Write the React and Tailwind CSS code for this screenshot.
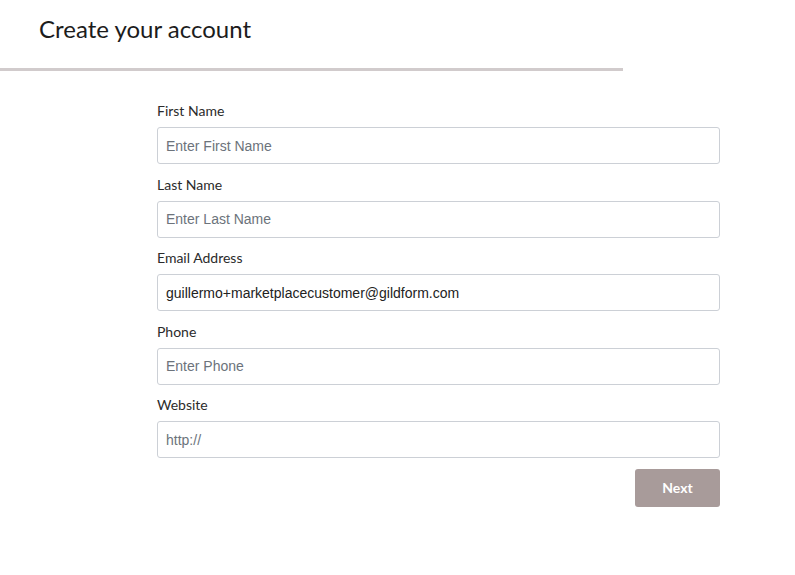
export default function App() {
  const fields = [
    { label: 'First Name', placeholder: 'Enter First Name' },
    { label: 'Last Name', placeholder: 'Enter Last Name' },
    { label: 'Email Address', placeholder: 'Enter Email', value: 'guillermo+marketplacecustomer@gildform.com' },
    { label: 'Phone', placeholder: 'Enter Phone' },
    { label: 'Website', placeholder: 'http://' },
  ];

  return (
    <div className="min-h-[575px] w-[795px] bg-white font-['Lato',sans-serif]">
      <div className="w-[623px] border-b-[3px] border-[#d1cbcc] pt-[13px] pb-[23px] pl-[39px]">
        <h1 className="text-[24px] leading-[32px] text-[#1c1c1c]">Create your account</h1>
      </div>
      <form className="ml-[157px] w-[563px] pt-[30px]" onSubmit={(e) => e.preventDefault()}>
        {fields.map((f) => (
          <div key={f.label} className="mb-[10.5px]">
            <label className="mb-[6px] block text-[14px] leading-[20px] text-[#2b2b2b]">{f.label}</label>
            <input
              type="text"
              defaultValue={f.value}
              placeholder={f.placeholder}
              className="block h-[37px] w-full rounded-[3px] border border-[#ccd0d6] px-[8px] font-['Liberation_Sans',Arial,sans-serif] text-[14px] text-[#222] placeholder:text-[#6c737b] outline-none"
            />
          </div>
        ))}
        <div className="flex justify-end">
          <button
            type="submit"
            className="h-[38px] w-[85px] rounded-[3px] bg-[#a89b9a] text-[14px] font-bold text-white"
          >
            Next
          </button>
        </div>
      </form>
    </div>
  );
}
